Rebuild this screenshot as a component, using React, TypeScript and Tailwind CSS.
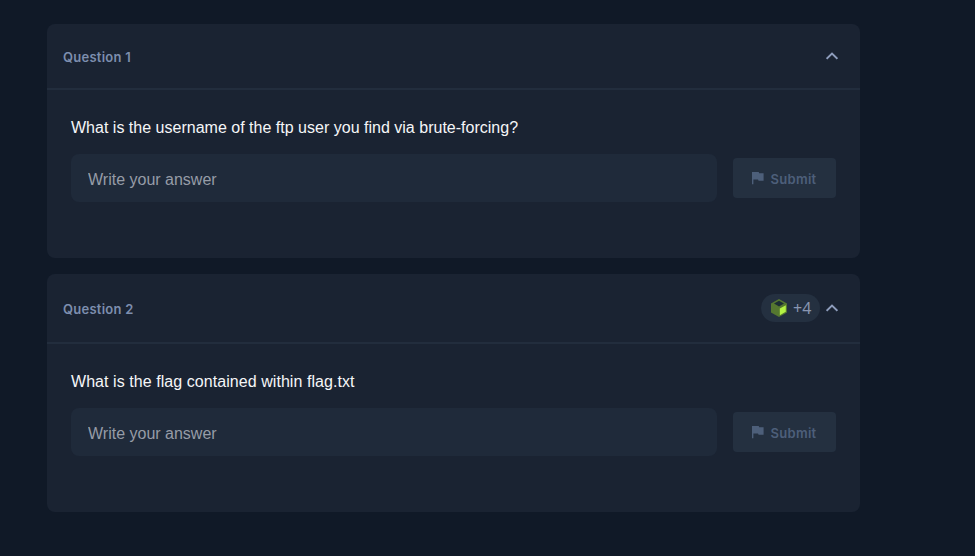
import React from "react";

function CubeIcon() {
  return (
    <svg width="18" height="20" viewBox="0 0 18 20" className="shrink-0">
      <path d="M9 1 17 5.5V14.5L9 19 1 14.5V5.5Z" fill="#557730" />
      <path d="M9 2.8 14 5.6 9 8.6 4 5.6Z" fill="#1c2d34" />
      <path d="M15.8 7.2 9.8 10.6V17.2l6-3.4Z" fill="#b3f244" />
    </svg>
  );
}

function Chevron() {
  return (
    <svg width="12" height="8" viewBox="0 0 12 8" fill="none" stroke="#8d9cbb" strokeWidth="1.9">
      <path d="M.6 6.8 6 1.5l5.4 5.3" />
    </svg>
  );
}

function Flag() {
  return (
    <svg width="12" height="14" viewBox="0 0 12 14" fill="#4d5f7a" className="shrink-0">
      <path d="M0 1h6.7l.5 1.2H11.6v7.6H6.6L6 8.6H1.4v4.6H0Z" />
    </svg>
  );
}

type Props = {
  title: string;
  prompt: string;
  points?: string;
  headerClass: string;
  promptClass: string;
};

function QuestionCard({ title, prompt, points, headerClass, promptClass }: Props) {
  return (
    <section className="w-[813px] overflow-hidden rounded-lg bg-[#1a2332]">
      <header className={`flex items-center justify-between border-b-2 border-[#222d3d] pl-4 pr-[22px] ${headerClass}`}>
        <h2 className="pt-0.5 font-['Inter',sans-serif] text-[13px] leading-5 font-semibold tracking-[0.25px] text-[#7d8eae]">
          {title}
        </h2>
        <div className="flex items-center gap-1.5">
          {points && (
            <span className="flex h-7 w-[59px] items-center gap-[5px] rounded-full bg-[#243040] pl-[9px] font-['Noto_Sans',sans-serif] text-base text-[#8996b0]">
              <CubeIcon />
              {points}
            </span>
          )}
          <Chevron />
        </div>
      </header>
      <div className="h-[168px] px-6 pt-7">
        <p className={`h-5 text-base leading-5 whitespace-nowrap text-[#f5f6f8] ${promptClass}`}>{prompt}</p>
        <div className="mt-4 flex items-center gap-4">
          <input
            className="h-12 w-[646px] rounded-lg bg-[#1f2a3a] px-[17px] pt-[3px] text-base text-white outline-none placeholder:text-[#969ca7]"
            placeholder="Write your answer"
          />
          <button className="flex h-10 w-[103px] items-center justify-center gap-1.5 rounded bg-[#243040] font-['Inter',sans-serif] text-[13px] font-semibold tracking-[0.3px] text-[#4d5f7a]">
            <Flag />
            <span className="pt-[3px]">Submit</span>
          </button>
        </div>
      </div>
    </section>
  );
}

export default function App() {
  return (
    <main className="flex h-[556px] w-[975px] flex-col gap-4 overflow-hidden bg-[#101927] pt-6 pl-[47px] font-['Liberation_Sans',Arial,sans-serif]">
      <QuestionCard
        title="Question 1"
        prompt="What is the username of the ftp user you find via brute-forcing?"
        headerClass="h-[66px]"
        promptClass="tracking-[0.01px]"
      />
      <QuestionCard
        title="Question 2"
        prompt="What is the flag contained within flag.txt"
        points="+4"
        headerClass="h-[70px]"
        promptClass="tracking-[0.06px]"
      />
    </main>
  );
}
